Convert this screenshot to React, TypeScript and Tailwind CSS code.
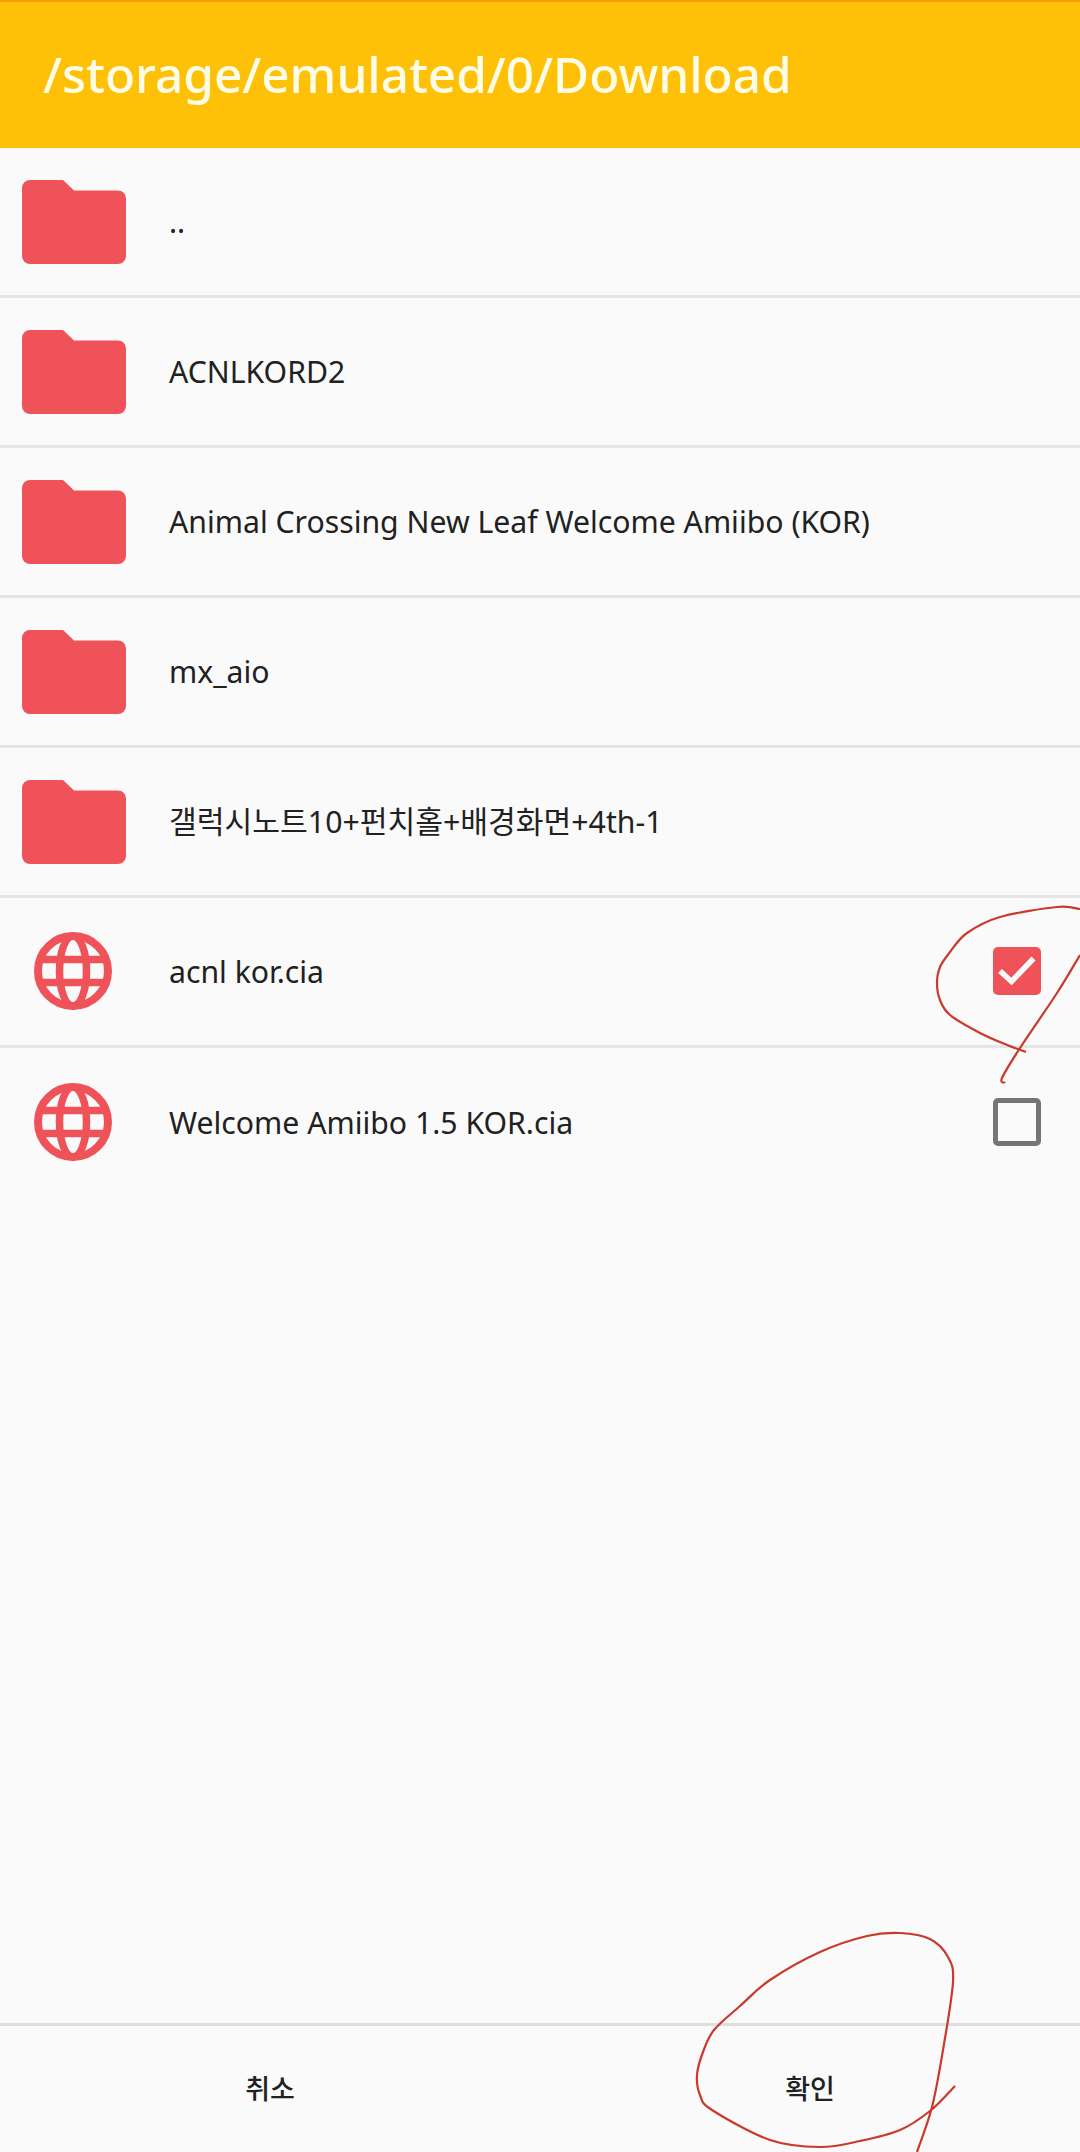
const RED = "#ef5359"

const FONT = { fontFamily: '"Noto Sans", "Noto Sans CJK KR", sans-serif' }

const entries = [
  { name: "..", kind: "folder" },
  { name: "ACNLKORD2", kind: "folder" },
  { name: "Animal Crossing New Leaf Welcome Amiibo (KOR)", kind: "folder" },
  { name: "mx_aio", kind: "folder" },
  { name: "갤럭시노트10+펀치홀+배경화면+4th-1", kind: "folder" },
  { name: "acnl kor.cia", kind: "file", checked: true },
  { name: "Welcome Amiibo 1.5 KOR.cia", kind: "file", checked: false },
]

function FolderIcon() {
  return (
    <svg width="104" height="84" viewBox="0 0 104 84" className="ml-[22px] shrink-0">
      <path
        fill={RED}
        d="M8 0H41L52 10.500H96a8 8 0 0 1 8 8V76a8 8 0 0 1-8 8H8a8 8 0 0 1-8-8V8a8 8 0 0 1 8-8z"
      />
    </svg>
  )
}

function GlobeIcon() {
  return (
    <svg width="80" height="80" viewBox="0 0 80 80" fill="none" stroke={RED} strokeWidth="7.500" className="mb-[2px] ml-[33px] mr-[13px] shrink-0">
      <circle cx="40" cy="40" r="35" strokeWidth="8" />
      <ellipse cx="40" cy="40" rx="13.500" ry="35" />
      <path d="M7 28.500H73M7 51.500H73" />
    </svg>
  )
}

function Checkbox({ checked }: { checked?: boolean }) {
  if (!checked) {
    return <div className="mb-[2px] ml-auto mr-[39px] h-12 w-12 rounded-[5px] border-[5px] border-[#757575]" />
  }
  return (
    <div className="mb-[2px] ml-auto mr-[39px] flex h-12 w-12 items-center justify-center rounded-[5px]" style={{ background: RED }}>
      <svg width="48" height="48" viewBox="0 0 48 48" fill="none" stroke="#fafafa" strokeWidth="5.500">
        <path d="M7 24L18.500 34.500L40.500 11.500" />
      </svg>
    </div>
  )
}

function smooth(points: number[][]) {
  let d = `M${points[0][0]} ${points[0][1]}`
  for (let i = 0; i < points.length - 1; i++) {
    const p0 = points[Math.max(i - 1, 0)]
    const p1 = points[i]
    const p2 = points[i + 1]
    const p3 = points[Math.min(i + 2, points.length - 1)]
    const c1x = p1[0] + (p2[0] - p0[0]) / 6
    const c1y = p1[1] + (p2[1] - p0[1]) / 6
    const c2x = p2[0] - (p3[0] - p1[0]) / 6
    const c2y = p2[1] - (p3[1] - p1[1]) / 6
    d += `C${c1x} ${c1y} ${c2x} ${c2y} ${p2[0]} ${p2[1]}`
  }
  return d
}

const pen = [
  [
    [1080, 909], [1057, 907], [1000, 917], [967, 933], [950, 952], [940, 967], [937, 983], [940, 1000], [950, 1015], [980, 1033],
    [1007, 1045], [1026, 1052],
  ],
  [[1080, 955], [1057, 993], [1020, 1048], [1002, 1078], [1005, 1083]],
  [
    [955, 2086], [930, 2111], [900, 2130], [860, 2141], [820, 2147], [770, 2140], [712, 2110], [700, 2095], [697, 2075], [703, 2052],
    [714, 2030], [740, 2006], [770, 1980], [820, 1952], [867, 1936], [900, 1933], [930, 1939], [948, 1957], [953, 1982], [943, 2050],
    [932, 2107], [917, 2152],
  ],
]

export default function App() {
  return (
    <div className="relative flex h-[2152px] w-[1080px] flex-col overflow-hidden bg-[#fafafa] text-[#212121]" style={FONT}>
      <header className="flex h-[148px] shrink-0 items-center border-t-2 border-[#f5a100] bg-[#ffc107] pb-[2px] pl-[43px] text-[49.400px] font-medium text-[#fffde7]">
        /storage/emulated/0/Download
      </header>

      <div className="flex-1">
        {entries.map((entry) => (
          <div key={entry.name} className="flex h-[150px] items-center border-b-[3px] border-[#e5e5e5] last:border-b-0">
            {entry.kind === "folder" ? <FolderIcon /> : <GlobeIcon />}
            <span className="ml-[43px] text-[30.200px]">{entry.name}</span>
            {entry.kind === "file" && <Checkbox checked={entry.checked} />}
          </div>
        ))}
      </div>

      <footer className="flex h-[129px] shrink-0 border-t-[3px] border-[#dedede]">
        <button className="flex-1 text-[27px] font-medium">취소</button>
        <button className="flex-1 text-[27px] font-medium">확인</button>
      </footer>

      <svg className="absolute inset-0" width="1080" height="2152" fill="none" stroke="#c9392c" strokeWidth="2.200">
        {pen.map((stroke, i) => (
          <path key={i} d={smooth(stroke)} />
        ))}
      </svg>
    </div>
  )
}
